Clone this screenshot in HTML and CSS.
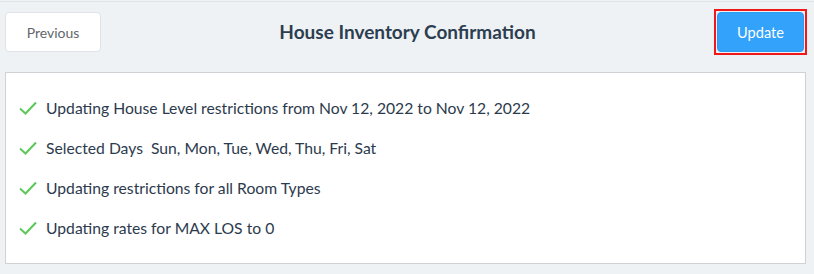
FILE: index.html
```html
<!DOCTYPE html>
<html>
<head>
<meta charset="utf-8">
<link rel="stylesheet" href="styles.css">
</head>
<body>
<div class="page">
  <header class="header">
    <button class="btn btn-prev">Previous</button>
    <h1 class="title">House Inventory Confirmation</h1>
    <span class="focus-ring"><button class="btn btn-update">Update</button></span>
  </header>
  <section class="panel">
    <ul class="list">
      <li class="item"><svg class="check" viewBox="0 0 18 14" width="18" height="14"><path d="M1 7.5 L6.5 12.5 L17 1.5" fill="none" stroke="#5cc85c" stroke-width="2"/></svg><span>Updating House Level restrictions from Nov 12, 2022 to Nov 12, 2022</span></li>
      <li class="item"><svg class="check" viewBox="0 0 18 14" width="18" height="14"><path d="M1 7.5 L6.5 12.5 L17 1.5" fill="none" stroke="#5cc85c" stroke-width="2"/></svg><span>Selected Days&nbsp; Sun, Mon, Tue, Wed, Thu, Fri, Sat</span></li>
      <li class="item"><svg class="check" viewBox="0 0 18 14" width="18" height="14"><path d="M1 7.5 L6.5 12.5 L17 1.5" fill="none" stroke="#5cc85c" stroke-width="2"/></svg><span>Updating restrictions for all Room Types</span></li>
      <li class="item"><svg class="check" viewBox="0 0 18 14" width="18" height="14"><path d="M1 7.5 L6.5 12.5 L17 1.5" fill="none" stroke="#5cc85c" stroke-width="2"/></svg><span>Updating rates for MAX LOS to 0</span></li>
    </ul>
  </section>
</div>
</body>
</html>
```
FILE: styles.css
```css
html, body {
  margin: 0;
  padding: 0;
  background: #eff2f5;
  font-family: Lato, "Open Sans", sans-serif;
}
.page {
  margin-top: 1px;
  border-top: 1px solid #e2e5e8;
  padding: 0 9px 0 5px;
}
.header {
  display: flex;
  justify-content: space-between;
  align-items: flex-start;
  padding-top: 10px;
  height: 60px;
  box-sizing: border-box;
}
.btn {
  display: block;
  height: 40px;
  border-radius: 4px;
  font-family: Lato, sans-serif;
  font-size: 14px;
  cursor: pointer;
}
.btn-prev {
  width: 96px;
  background: #fff;
  border: 1px solid #dfe2e6;
  color: #63666a;
}
.focus-ring {
  display: block;
  margin-top: -3px;
  margin-right: -2px;
  padding: 1px;
  border: 2px solid #f01818;
}
.btn-update {
  width: 87px;
  background: #33a2fb;
  border: 1px solid #2e9af0;
  color: #fff;
  font-size: 14.6px;
}
.title {
  margin: 0;
  font-size: 19px;
  font-weight: 700;
  color: #2c3e50;
  line-height: 40px;
}
.panel {
  margin-top: 10px;
  width: 801px;
  box-sizing: border-box;
  height: 192px;
  background: #fff;
  border: 1px solid #cfd1d4;
}
.list {
  list-style: none;
  margin: 0;
  padding: 15px 0 0 13px;
}
.item {
  display: flex;
  align-items: center;
  height: 40px;
  font-size: 15.7px;
  color: #2c3a4d;
}
.check {
  margin-right: 9px;
  flex: none;
}
```
